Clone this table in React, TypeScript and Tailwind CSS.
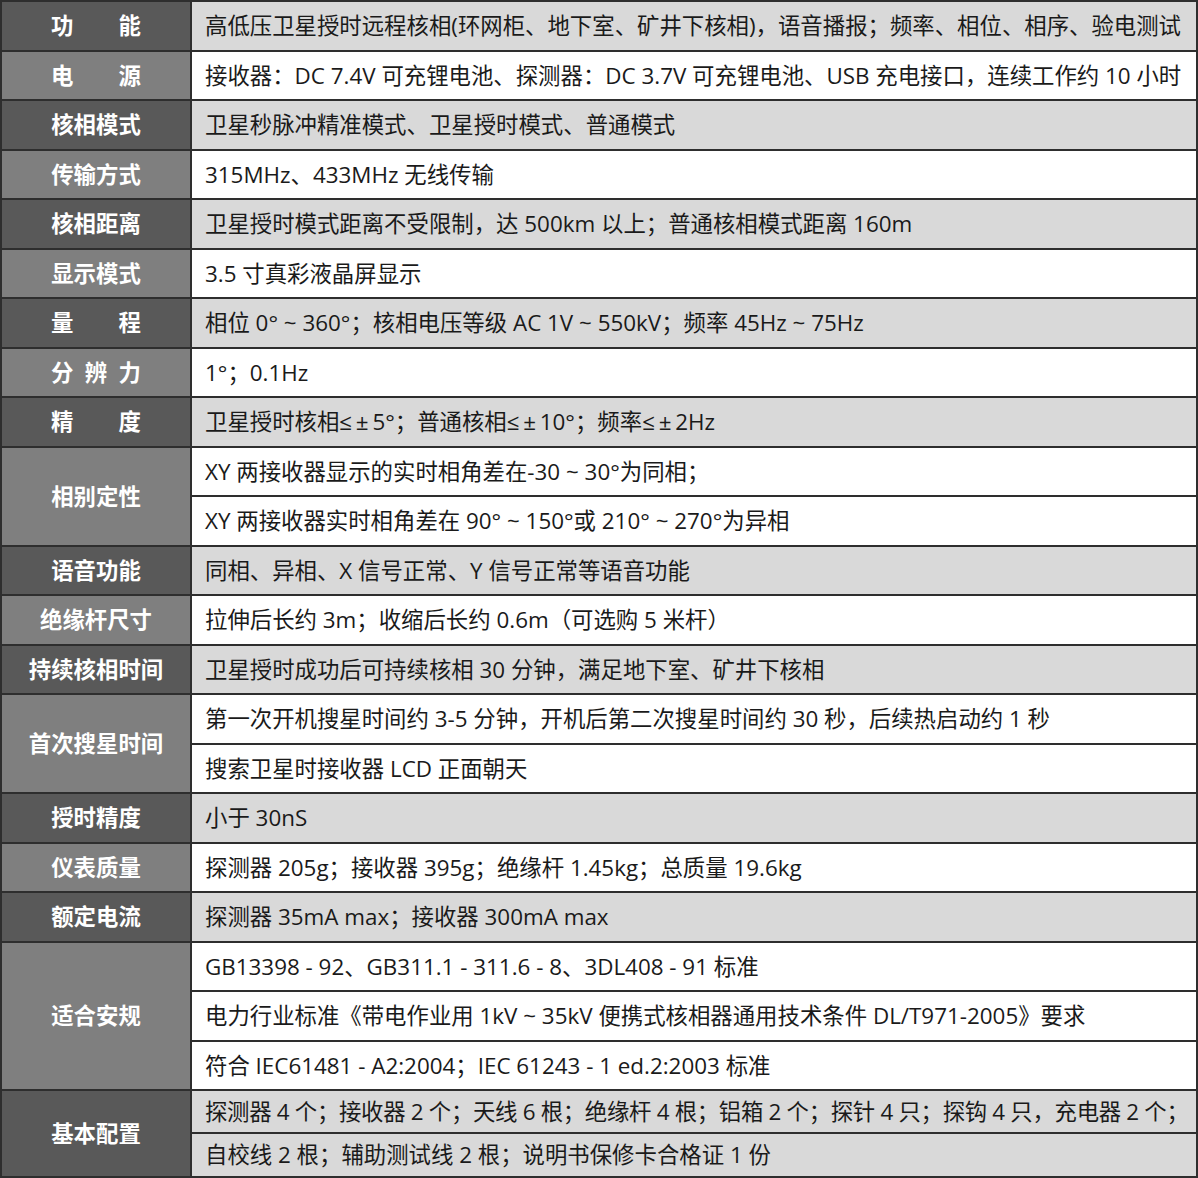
import React from "react";

type Row = { label: string; values: string[]; spread?: boolean };

const T = " ~ ";
const LE = "≤\u2009±\u2009";

const rows: Row[] = [
  { label: "功能", spread: true, values: ["高低压卫星授时远程核相(环网柜、地下室、矿井下核相)，语音播报；频率、相位、相序、验电测试"] },
  { label: "电源", spread: true, values: ["接收器：DC 7.4V 可充锂电池、探测器：DC 3.7V 可充锂电池、USB 充电接口，连续工作约 10 小时"] },
  { label: "核相模式", values: ["卫星秒脉冲精准模式、卫星授时模式、普通模式"] },
  { label: "传输方式", values: ["315MHz、433MHz 无线传输"] },
  { label: "核相距离", values: ["卫星授时模式距离不受限制，达 500km 以上；普通核相模式距离 160m"] },
  { label: "显示模式", values: ["3.5 寸真彩液晶屏显示"] },
  { label: "量程", spread: true, values: [`相位 0°${T}360°；核相电压等级 AC 1V${T}550kV；频率 45Hz${T}75Hz`] },
  { label: "分辨力", spread: true, values: ["1°；0.1Hz"] },
  { label: "精度", spread: true, values: [`卫星授时核相${LE}5°；普通核相${LE}10°；频率${LE}2Hz`] },
  { label: "相别定性", values: [`XY 两接收器显示的实时相角差在-30${T}30°为同相；`, `XY 两接收器实时相角差在 90°${T}150°或 210°${T}270°为异相`] },
  { label: "语音功能", values: ["同相、异相、X 信号正常、Y 信号正常等语音功能"] },
  { label: "绝缘杆尺寸", values: ["拉伸后长约 3m；收缩后长约 0.6m（可选购 5 米杆）"] },
  { label: "持续核相时间", values: ["卫星授时成功后可持续核相 30 分钟，满足地下室、矿井下核相"] },
  { label: "首次搜星时间", values: ["第一次开机搜星时间约 3-5 分钟，开机后第二次搜星时间约 30 秒，后续热启动约 1 秒", "搜索卫星时接收器 LCD 正面朝天"] },
  { label: "授时精度", values: ["小于 30nS"] },
  { label: "仪表质量", values: ["探测器 205g；接收器 395g；绝缘杆 1.45kg；总质量 19.6kg"] },
  { label: "额定电流", values: ["探测器 35mA max；接收器 300mA max"] },
  { label: "适合安规", values: ["GB13398 - 92、GB311.1 - 311.6 - 8、3DL408 - 91 标准", `电力行业标准《带电作业用 1kV${T}35kV 便携式核相器通用技术条件 DL/T971-2005》要求`, "符合 IEC61481 - A2:2004；IEC 61243 - 1 ed.2:2003 标准"] },
  { label: "基本配置", values: ["探测器 4 个；接收器 2 个；天线 6 根；绝缘杆 4 根；铝箱 2 个；探针 4 只；探钩 4 只，充电器 2 个；", "自校线 2 根；辅助测试线 2 根；说明书保修卡合格证 1 份"] },
];

const spanClass = (n: number) => (n === 3 ? "row-span-3" : n === 2 ? "row-span-2" : "row-span-1");

export default function App() {
  return (
    <div
      className="w-[1198px] h-[1178px] bg-[#2e2e2e] p-[2px] grid grid-cols-[188px_1fr] grid-rows-[repeat(11,48px_47px)_41px_42px] gap-[2px] overflow-hidden"
      style={{ fontFamily: '"Open Sans", "Noto Sans CJK SC", sans-serif' }}
    >
      {rows.map((r, i) => {
        const odd = i % 2 === 0;
        return (
          <React.Fragment key={i}>
            <div
              className={`col-start-1 ${spanClass(r.values.length)} ${odd ? "bg-[#595959]" : "bg-[#7f7f7f]"} flex items-center justify-center text-white font-bold text-[22.4px]`}
            >
              {r.spread ? (
                <span className="w-[90px] flex justify-between">
                  {r.label.split("").map((c, k) => (
                    <span key={k}>{c}</span>
                  ))}
                </span>
              ) : (
                <span className="whitespace-nowrap">{r.label}</span>
              )}
            </div>
            {r.values.map((v, j) => (
              <div
                key={j}
                className={`col-start-2 ${odd ? "bg-[#d9d9d9]" : "bg-white"} flex items-center pl-[13px] text-[22.4px] text-[#1a1a1a] whitespace-nowrap overflow-hidden ${i === 18 && j === 0 ? "tracking-[-0.3px]" : ""}`}
              >
                {v}
              </div>
            ))}
          </React.Fragment>
        );
      })}
    </div>
  );
}
